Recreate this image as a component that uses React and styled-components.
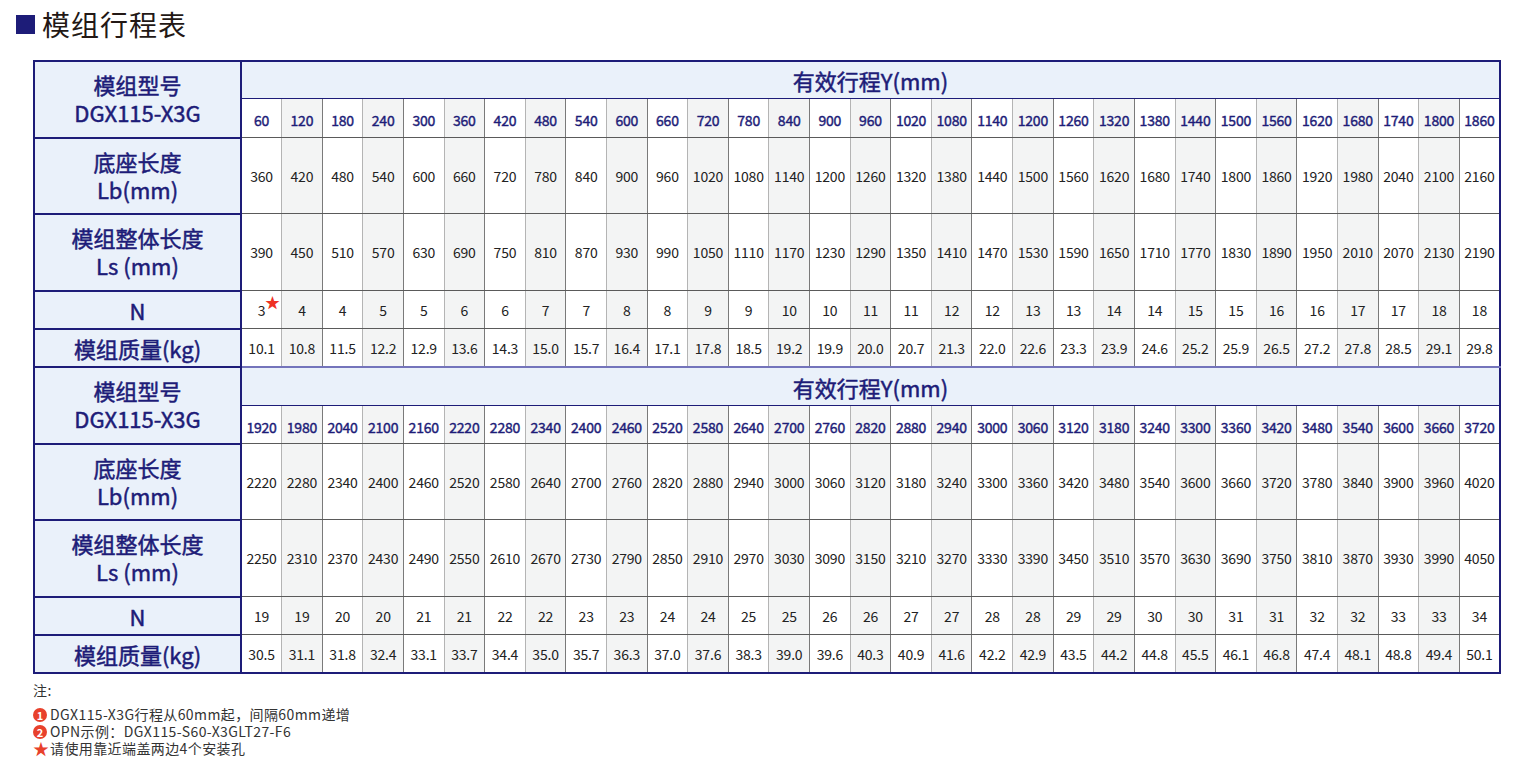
import React from 'react';
import styled, { createGlobalStyle } from 'styled-components';

const GlobalStyle = createGlobalStyle`
  body {
    margin: 0;
    background: #ffffff;
    font-family: "Noto Sans CJK SC", "Noto Sans", sans-serif;
  }
`;

const range = (start, step, count) =>
  Array.from({ length: count }, (_, i) => start + i * step);

const blocks = [
  {
    strokes: range(60, 60, 31),
    n: [3, 4, 4, 5, 5, 6, 6, 7, 7, 8, 8, 9, 9, 10, 10, 11, 11, 12, 12, 13, 13, 14, 14, 15, 15, 16, 16, 17, 17, 18, 18],
    kg: ['10.1', '10.8', '11.5', '12.2', '12.9', '13.6', '14.3', '15.0', '15.7', '16.4', '17.1', '17.8', '18.5', '19.2', '19.9', '20.0', '20.7', '21.3', '22.0', '22.6', '23.3', '23.9', '24.6', '25.2', '25.9', '26.5', '27.2', '27.8', '28.5', '29.1', '29.8'],
  },
  {
    strokes: range(1920, 60, 31),
    n: [19, 19, 20, 20, 21, 21, 22, 22, 23, 23, 24, 24, 25, 25, 26, 26, 27, 27, 28, 28, 29, 29, 30, 30, 31, 31, 32, 32, 33, 33, 34],
    kg: ['30.5', '31.1', '31.8', '32.4', '33.1', '33.7', '34.4', '35.0', '35.7', '36.3', '37.0', '37.6', '38.3', '39.0', '39.6', '40.3', '40.9', '41.6', '42.2', '42.9', '43.5', '44.2', '44.8', '45.5', '46.1', '46.8', '47.4', '48.1', '48.8', '49.4', '50.1'],
  },
];

const App = () => {
  return (
    <Page>
      <GlobalStyle />
      <Title>
        <TitleMark />
        模组行程表
      </Title>

      <Table>
        <colgroup>
          <col style={{ width: 207 }} />
          {range(0, 1, 31).map((i) => (
            <col key={i} />
          ))}
        </colgroup>
        {blocks.map((b, bi) => (
          <Body key={bi} first={bi === 0}>
            <tr>
              <Label rowSpan={2}>
                <Line>模组型号</Line>
                <Line>DGX115-X3G</Line>
              </Label>
              <Heading colSpan={31} $h={bi === 0 ? 37 : 38}>
                有效行程Y(mm)
              </Heading>
            </tr>
            <tr>
              {b.strokes.map((v, i) => (
                <Stroke key={i} shade={i % 2 === 1} $h={bi === 0 ? 39 : 38}>
                  {v}
                </Stroke>
              ))}
            </tr>
            <tr>
              <Label>
                <Line>底座长度</Line>
                <Line>Lb(mm)</Line>
              </Label>
              {b.strokes.map((v, i) => (
                <Cell key={i} shade={i % 2 === 1} $h={76}>
                  {v + 300}
                </Cell>
              ))}
            </tr>
            <tr>
              <Label>
                <Line>模组整体长度</Line>
                <Line>Ls (mm)</Line>
              </Label>
              {b.strokes.map((v, i) => (
                <Cell key={i} shade={i % 2 === 1} $h={77}>
                  {v + 330}
                </Cell>
              ))}
            </tr>
            <tr>
              <Label>N</Label>
              {b.n.map((v, i) => (
                <Cell key={i} shade={i % 2 === 1} $h={38}>
                  {v}
                  {bi === 0 && i === 0 && <Star>★</Star>}
                </Cell>
              ))}
            </tr>
            <tr>
              <Label>模组质量(kg)</Label>
              {b.kg.map((v, i) => (
                <Cell key={i} shade={i % 2 === 1} $h={38}>
                  {v}
                </Cell>
              ))}
            </tr>
          </Body>
        ))}
      </Table>

      <Notes>
        <NoteHead>注:</NoteHead>
        <NoteList>
          <NoteItem>
            <Badge>1</Badge>DGX115-X3G行程从60mm起，间隔60mm递增
          </NoteItem>
          <NoteItem>
            <Badge>2</Badge>OPN示例：DGX115-S60-X3GLT27-F6
          </NoteItem>
          <NoteItem>
            <NoteStar>★</NoteStar>请使用靠近端盖两边4个安装孔
          </NoteItem>
        </NoteList>
      </Notes>
    </Page>
  );
};

const navy = '#1d1c78';

const Page = styled.div`
  width: 1527px;
  height: 762px;
  box-sizing: border-box;
  padding: 7px 0 0 33px;
  position: relative;
`;

const Title = styled.h1`
  margin: 0 0 0 -17px;
  display: flex;
  align-items: center;
  gap: 7px;
  height: 34px;
  font-size: 28px;
  font-weight: 400;
  color: #231815;
  letter-spacing: 1px;
`;

const TitleMark = styled.span`
  width: 19px;
  height: 19px;
  background: ${navy};
`;

const Table = styled.table`
  margin-top: 19px;
  width: 1468px;
  table-layout: fixed;
  border-collapse: collapse;
  border: 2px solid ${navy};
`;

const Body = styled.tbody`
  border-top: ${(props) => (props.first ? 'none' : '2px solid #7474bb')};
`;

const Label = styled.td`
  background: #eaf1fa;
  border: 2px solid ${navy};
  border-left: none;
  text-align: center;
  vertical-align: middle;
  color: ${navy};
  font-size: 22px;
  font-weight: 400;
  -webkit-text-stroke: 0.5px ${navy};
  line-height: 26px;
  padding: 0;
`;

const Line = styled.div`
  height: 28px;
`;

const Heading = styled.td`
  height: ${(props) => props.$h - 1}px;
  background: #eaf1fa;
  border-bottom: 1px solid ${navy};
  text-align: center;
  color: ${navy};
  font-size: 22px;
  font-weight: 400;
  -webkit-text-stroke: 0.5px ${navy};
  padding: 0;
`;

const Cell = styled.td`
  height: ${(props) => props.$h - 1}px;
  background: ${(props) => (props.shade ? '#f3f4f4' : '#ffffff')};
  border-bottom: 1px solid #5a5a5a;
  border-left: 1px solid ${(props) => (props.shade ? '#b4b4b4' : '#7a7a7a')};
  text-align: center;
  vertical-align: middle;
  color: #222222;
  font-size: 14px;
  padding: 0;
  white-space: nowrap;
  position: relative;
  letter-spacing: -0.2px;
`;

const Stroke = styled(Cell)`
  height: ${(props) => props.$h - 5}px;
  color: ${navy};
  font-weight: 400;
  -webkit-text-stroke: 0.4px ${navy};
  padding-top: 4px;
`;

const Star = styled.span`
  position: absolute;
  top: 0px;
  left: 23px;
  color: #ee3124;
  font-size: 15px;
`;

const Notes = styled.div`
  margin-top: 8px;
  color: #333333;
  font-size: 14px;
  line-height: 17px;
  letter-spacing: 0.4px;
`;

const NoteHead = styled.div`
  margin-bottom: 7px;
`;

const NoteList = styled.div`
  display: flex;
  flex-direction: column;
`;

const NoteItem = styled.div`
  display: flex;
  align-items: center;
  gap: 3px;
`;

const Badge = styled.span`
  width: 14px;
  height: 14px;
  border-radius: 50%;
  background: #e8412c;
  color: #ffffff;
  font-size: 11px;
  font-weight: 700;
  line-height: 14px;
  text-align: center;
  letter-spacing: 0;
`;

const NoteStar = styled.span`
  width: 14px;
  color: #e8412c;
  font-size: 16px;
  line-height: 17px;
  text-align: center;
  letter-spacing: 0;
`;

export default App;
